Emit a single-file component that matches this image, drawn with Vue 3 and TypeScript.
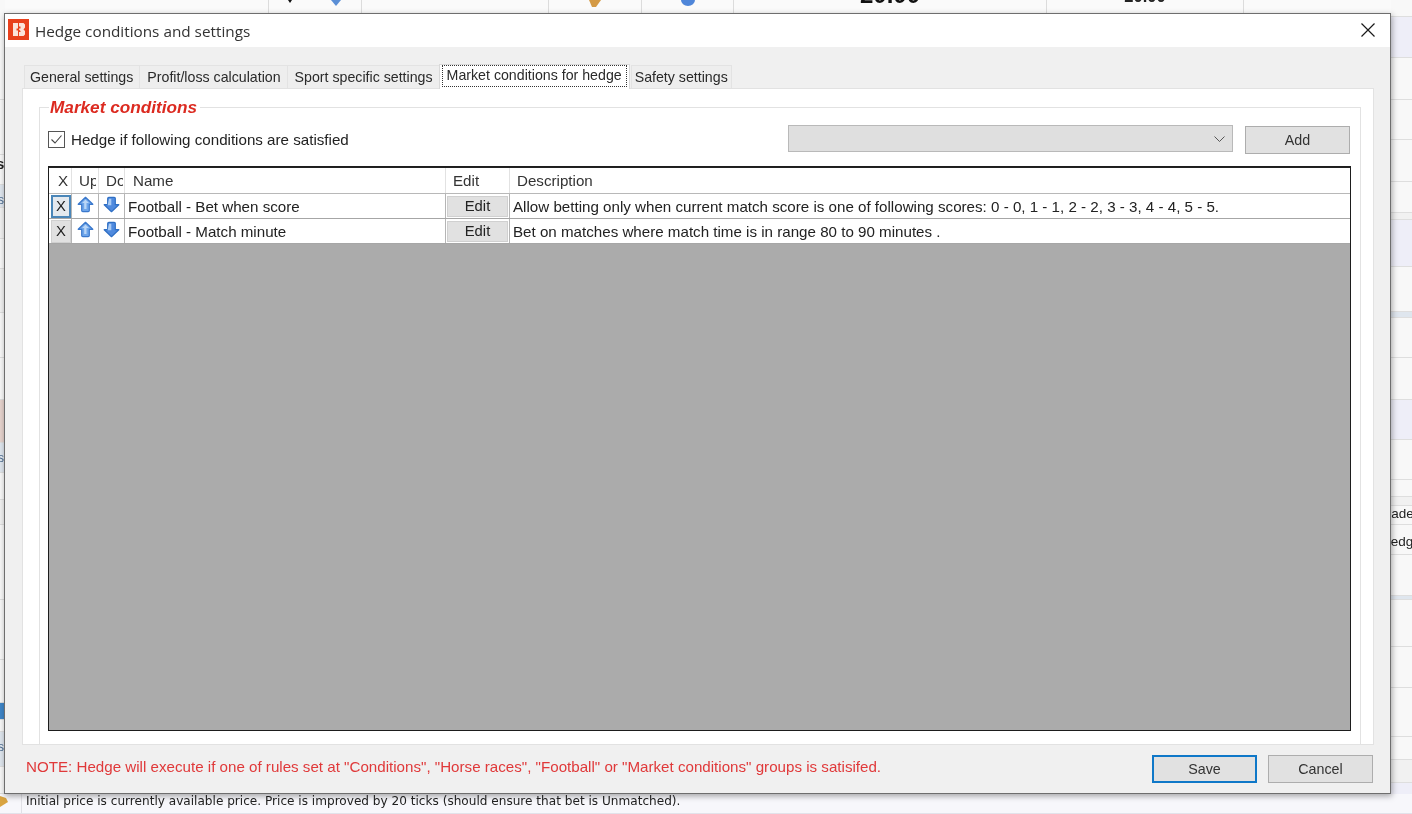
<script setup lang="ts">
interface Row { name: string; desc: string; focus: boolean }
interface Band { y: number; c: string; t?: string; bold?: boolean }
const rows: Row[] = [
  { name: 'Football - Bet when score', desc: 'Allow betting only when current match score is one of following scores: 0 - 0, 1 - 1, 2 - 2, 3 - 3, 4 - 4, 5 - 5.', focus: true },
  { name: 'Football - Match minute', desc: 'Bet on matches where match time is in range 80 to 90 minutes .', focus: false },
]
const tabs = ['General settings', 'Profit/loss calculation', 'Sport specific settings', 'Market conditions for hedge', 'Safety settings']
// each band runs from its y to the next band's y
const withHeights = (list: Band[], end: number) =>
  list.map((b, i) => ({ ...b, h: (i + 1 < list.length ? list[i + 1].y : end) - b.y }))
const rightBands = withHeights([
  { y: 0, c: 'w' }, { y: 17, c: 'l' }, { y: 58, c: 'w' }, { y: 100, c: 'w' }, { y: 140, c: 'w' }, { y: 182, c: 'w' }, { y: 213, c: 'g' },
  { y: 220, c: 'l' }, { y: 267, c: 'w' }, { y: 312, c: 'b' }, { y: 318, c: 'w' }, { y: 358, c: 'w' }, { y: 400, c: 'l' }, { y: 440, c: 'w' },
  { y: 480, c: 'w' }, { y: 497, c: 'g' }, { y: 506, c: 'w', t: 'Trade' }, { y: 525, c: 'w', t: 'Hedge' }, { y: 555, c: 'w' }, { y: 596, c: 'b' },
  { y: 600, c: 'w' }, { y: 647, c: 'w' }, { y: 688, c: 'w' }, { y: 737, c: 'w' }, { y: 760, c: 'g' }, { y: 783, c: 'l' },
], 814)
const leftBands = withHeights([
  { y: 0, c: 'w' }, { y: 100, c: 'w' }, { y: 155, c: 'w', t: 's', bold: true }, { y: 185, c: 'b', t: 's' }, { y: 208, c: 'g' }, { y: 239, c: 'w' }, { y: 269, c: 'g' },
  { y: 313, c: 'w' }, { y: 358, c: 'w' }, { y: 400, c: 'p' }, { y: 443, c: 'b', t: 's' }, { y: 473, c: 'w' }, { y: 500, c: 'g' }, { y: 525, c: 'w' },
  { y: 600, c: 'w' }, { y: 660, c: 'w' }, { y: 703, c: 'm' }, { y: 720, c: 'w' }, { y: 732, c: 'b', t: 's' }, { y: 767, c: 'w' },
], 794)
</script>

<template>
  <div class="desk">
    <div class="bg-top">
      <div class="c c1"></div>
      <div class="c c2">
        <svg width="6" height="4" viewBox="0 0 6 4"><path d="M1 0h4L3 3z" fill="#111"/></svg>
        <svg width="14" height="8" viewBox="0 0 14 8"><path d="M2 0h10L7 6z" fill="#5b8fd6"/></svg>
      </div>
      <div class="c c3"></div>
      <div class="c c4"><svg width="14" height="8" viewBox="0 0 14 8"><path d="M1 0h12L8 7H4z" fill="#d49a45"/></svg></div>
      <div class="c c5"><svg width="16" height="6" viewBox="0 0 16 6"><path d="M1 0a7 6 0 0 0 14 0z" fill="#4f86d9"/></svg></div>
      <div class="c c6"><b class="big">20.00</b></div>
      <div class="c c7"><b class="small">20.00</b></div>
      <div class="c c8"></div>
    </div>

    <div class="bg-left">
      <div v-for="b in leftBands" :key="b.y" class="band" :class="b.c" :style="{ height: b.h + 'px' }"><span v-if="b.t" class="lt" :class="{ lb: b.bold }">{{ b.t }}</span></div>
    </div>

    <div class="bg-right">
      <div v-for="b in rightBands" :key="b.y" class="band" :class="b.c" :style="{ height: b.h + 'px' }">
        <span v-if="b.t" class="rt" :class="b.t">{{ b.t }}</span>
      </div>
    </div>

    <div class="bg-status">
      <svg class="st-ic" width="8" height="14" viewBox="0 0 8 14"><path d="M0 2l6 2 2 4-8 5z" fill="#d9a441"/></svg>
      <span class="st-txt">Initial price is currently available price. Price is improved by 20 ticks (should ensure that bet is Unmatched).</span>
    </div>

    <section class="win">
      <header class="title">
        <svg class="logo" width="21" height="21" viewBox="0 0 21 21">
          <rect width="21" height="21" fill="#e8401c"/>
          <path d="M5 4h5v5.500H8.500v2H10V17H5zM11 4h4.500L17 5.500v3L15.500 10.500l1.500 1.500v3.500L15.500 17H11v-4h1.500v-1L11 10.500V9.500h1.500v-2H11z" fill="#fbe3da"/>
        </svg>
        <span class="title-text">Hedge conditions and settings</span>
        <svg class="close" width="14" height="14" viewBox="0 0 14 14"><path d="M.5.500l13 13M13.500.500l-13 13" stroke="#1a1a1a" stroke-width="1.200" fill="none"/></svg>
      </header>

      <div class="client">
        <nav class="tabs">
          <div v-for="(t, i) in tabs" :key="t" class="tab" :class="{ active: i === 3 }"><span class="tab-l">{{ t }}</span></div>
        </nav>

        <div class="panel">
          <fieldset class="group">
            <legend class="legend">Market conditions</legend>
            <div class="toolbar">
              <label class="chk">
                <svg class="box" width="17" height="17" viewBox="0 0 17 17"><rect x=".5" y=".5" width="16" height="16" fill="#fff" stroke="#555"/><path d="M3.500 8.500l3.500 3.500 6.500-7.500" stroke="#444" fill="none" stroke-width="1.100"/></svg>
                <span>Hedge if following conditions are satisfied</span>
              </label>
              <div class="combo"><svg width="11" height="6" viewBox="0 0 11 6"><path d="M.5.500l5 5 5-5" stroke="#555" fill="none"/></svg></div>
              <button class="btn add">Add</button>
            </div>

            <div class="grid">
              <div class="g-head">
                <div class="hc w-x cx">X</div>
                <div class="hc w-u"><span class="clip">Up</span></div>
                <div class="hc w-d"><span class="clip">Do</span></div>
                <div class="hc w-n">Name</div>
                <div class="hc w-e">Edit</div>
                <div class="hc w-desc">Description</div>
              </div>
              <div v-for="r in rows" :key="r.name" class="g-row">
                <div class="rc w-x"><button class="cellbtn x" :class="{ foc: r.focus }">X</button></div>
                <div class="rc w-u ic">
                  <svg width="17" height="17" viewBox="0 0 17 17">
                    <path d="M8.500 1.300L15.800 8.300 12.300 8.300V14.500Q12.300 15.600 11.200 15.600H5.800Q4.700 15.600 4.700 14.500V8.300H1.200z" fill="#6fa6ea" stroke="#3a78cc" stroke-width="1.200" stroke-linejoin="round"/>
                    <path d="M8.500 3.400L12 6.900H9.500V13H7.200V6.900H5z" fill="#b9d6f7"/>
                  </svg>
                </div>
                <div class="rc w-d ic">
                  <svg width="17" height="17" viewBox="0 0 17 17">
                    <path d="M8.500 15.700L15.800 8.700 12.300 8.700V2.500Q12.300 1.400 11.200 1.400H5.800Q4.700 1.400 4.700 2.500V8.700H1.200z" fill="#4f8ade" stroke="#2f6fc4" stroke-width="1.200" stroke-linejoin="round"/>
                    <path d="M6 2.800H8.300V9.300H4.600z" fill="#a9cbf4"/>
                  </svg>
                </div>
                <div class="rc w-n txt">{{ r.name }}</div>
                <div class="rc w-e"><button class="cellbtn e">Edit</button></div>
                <div class="rc w-desc txt">{{ r.desc }}</div>
              </div>
              <div class="g-empty"></div>
            </div>
          </fieldset>
        </div>

        <footer class="foot">
          <span class="note">NOTE: Hedge will execute if one of rules set at "Conditions", "Horse races", "Football" or "Market conditions" groups is satisifed.</span>
          <button class="btn save">Save</button>
          <button class="btn cancel">Cancel</button>
        </footer>
      </div>
    </section>
  </div>
</template>

<style>
html, body { margin: 0; background: #fff; }
</style>

<style scoped>
.desk { position: relative; width: 1412px; height: 814px; overflow: hidden; background: #fbfbfd; font-family: "Liberation Sans", Arial, sans-serif; color: #1c1c1c; filter: blur(.35px); }

.bg-top { display: flex; height: 14px; background: #fafafa; }
.c { border-right: 1px solid #dcdcdc; box-sizing: border-box; display: flex; justify-content: center; align-items: flex-start; overflow: hidden; gap: 36px; }
.c1 { width: 268px; border-right: 0; } .c2 { width: 94px; border-left: 1px solid #dcdcdc; } .c3 { width: 187px; } .c4 { width: 93px; } .c5 { width: 92px; } .c6 { width: 313px; } .c7 { width: 197px; } .c8 { flex: 1; border-right: 0; }
.big { font-size: 24px; line-height: 10px; margin-top: -10px; color: #111; }
.small { font-size: 16.500px; line-height: 4px; margin-top: -6px; color: #222; }

.bg-left { position: absolute; left: 0; top: 0; width: 5px; overflow: hidden; }
.bg-right { position: absolute; left: 1391px; top: 0; width: 21px; overflow: hidden; }
.band { box-sizing: border-box; border-bottom: 1px solid #dedede; position: relative; overflow: hidden; }
.band.w { background: #f8f8f8; } .band.l { background: #eeeef8; } .band.g { background: #f1f1f1; } .band.b { background: #dfe6ee; } .band.p { background: #e6d3cd; } .band.m { background: #3f86c8; }
.lt { position: absolute; left: -2px; top: 8px; font-size: 12px; color: #4b6b8f; }
.lb { font-size: 15px; font-weight: bold; color: #222; top: 0; left: -4px; }
.rt { position: absolute; top: 0; font-size: 13.500px; line-height: 15px; color: #222; white-space: nowrap; }
.Trade { left: -12px; }
.Hedge { left: -10px; top: 9px; }

.bg-status { position: absolute; left: 0; bottom: 0; height: 20px; width: 100%; box-sizing: border-box; background: #f7f7fb; border-bottom: 1px solid #e2e2ea; display: flex; align-items: flex-start; }
.st-ic { flex: none; margin-right: 13px; }
.st-txt { font-family: "DejaVu Sans", sans-serif; font-size: 12.100px; line-height: 14px; color: #222; white-space: nowrap; border-left: 1px solid #e0e0e6; padding-left: 4px; height: 19px; }

.win { position: absolute; left: 4px; top: 13px; width: 1387px; height: 781px; box-sizing: border-box; border: 1px solid #6e6e6e; background: #f0f0f0; display: flex; flex-direction: column; box-shadow: 1px 2px 6px rgba(0,0,0,.35); }
.title { height: 33px; flex: none; background: #fff; display: flex; align-items: center; padding-left: 3px; padding-right: 15px; }
.logo { flex: none; margin-right: 6px; margin-bottom: 2px; }
.title-text { font-family: "Open Sans", sans-serif; font-size: 15.300px; color: #333; flex: 1; }
.close { flex: none; margin-bottom: 2px; }

.client { flex: 1; min-height: 0; display: flex; flex-direction: column; padding: 0 16px 0 17px; }
.tabs { display: flex; height: 23px; margin-top: 18px; padding-left: 2px; align-items: flex-end; flex: none; position: relative; z-index: 1; }
.tab { box-sizing: border-box; height: 23px; padding: 0 6px 0 7px; background: #eeeeee; border-top: 1px solid #e3e3e3; border-right: 1px solid #e3e3e3; font-size: 14.200px; display: flex; align-items: center; white-space: nowrap; color: #2a2a2a; }
.tab:first-child { border-left: 1px solid #e3e3e3; padding-left: 5px; }
.tab:last-child { margin-left: 1px; padding: 0 3px; border-left: 1px solid #e3e3e3; }
.tab.active { background: #fff; height: 25px; padding: 0 2px; margin: 0 0 -1px -1px; border: 1px solid #d9d9d9; border-bottom: 0; align-items: flex-start; }
.tab.active .tab-l { outline: 1px dotted #333; outline-offset: -1px; padding: 0 5px; height: 22px; line-height: 20px; }

.panel { flex: none; height: 657px; box-sizing: border-box; background: #fff; border: 1px solid #e2e2e2; padding: 0 12px 0 16px; }
.group { margin: 9px 0 0; padding: 0 9px 0 8px; height: 647px; box-sizing: border-box; border: 1px solid #e2e2e2; border-bottom: 0; min-width: 0; }
.legend { font-size: 17.200px; font-weight: bold; font-style: italic; color: #dc2a20; padding: 0 3px 0 1px; margin-left: 1px; line-height: 19px; }

.toolbar { display: flex; align-items: flex-start; height: 49px; padding-top: 8px; box-sizing: border-box; }
.chk { display: flex; align-items: center; gap: 6px; font-size: 15.150px; width: 740px; height: 17px; padding-top: 6px; flex: none; color: #222; }
.box { flex: none; }
.combo { box-sizing: border-box; width: 445px; height: 27px; background: #dfdfdf; border: 1px solid #b9b9b9; display: flex; align-items: center; justify-content: flex-end; padding-right: 7px; margin-right: 12px; flex: none; }
.btn { box-sizing: border-box; font: 14.300px "Liberation Sans", Arial, sans-serif; color: #333; background: #e1e1e1; border: 1px solid #adadad; padding: 0; }
.add { width: 105px; height: 28px; margin-top: 1px; flex: none; }

.grid { box-sizing: border-box; height: 565px; width: 1303px; border: 1px solid #1d1d1d; background: #ababab; display: flex; flex-direction: column; }
.g-head { display: flex; height: 27px; background: #fff; flex: none; border-bottom: 1px solid #b8b8b8; border-top: 1px solid #222; box-sizing: border-box; }
.g-row { display: flex; height: 25px; background: #fff; flex: none; box-sizing: border-box; border-bottom: 1px solid #a6a6a6; }
.g-row:last-of-type { border-bottom: 0; }
.hc { box-sizing: border-box; border-right: 1px solid #e2e2e2; font-size: 15.150px; line-height: 26px; padding-left: 8px; overflow: hidden; white-space: nowrap; color: #333; }
.hc.cx { padding-left: 9px; }
.rc { box-sizing: border-box; border-right: 1px solid #b5b5b5; display: flex; align-items: center; font-size: 15.150px; white-space: nowrap; overflow: hidden; }
.w-x { width: 23px; flex: none; } .w-u { width: 27px; flex: none; } .w-d { width: 26px; flex: none; } .w-n { width: 321px; flex: none; } .w-e { width: 64px; flex: none; } .w-desc { flex: 1; border-right: 0; }
.hc.w-u, .hc.w-d, .hc.w-e, .hc.w-desc { padding-left: 7px; }
.clip { display: block; width: 17px; overflow: hidden; }
.ic { justify-content: center; padding-bottom: 3px; }
.txt { padding-left: 3px; color: #222; }
.cellbtn { box-sizing: border-box; font: 14.800px "Liberation Sans", Arial, sans-serif; color: #222; background: #e1e1e1; border: 1px solid #d0d0d0; padding: 0; }
.x { width: 20px; height: 23px; margin-left: 2px; }
.x.foc { border: 2px solid #4a86b8; background: #e4e9ee; }
.e { width: 61px; height: 21px; margin-left: 1px; }
.g-empty { flex: 1; }

.foot { flex: 1; display: flex; align-items: flex-start; padding: 10px 1px 0 4px; }
.note { color: #e0393a; font-size: 15.150px; flex: 1; white-space: nowrap; padding-top: 3px; }
.save { width: 105px; height: 28px; border: 2px solid #0f78c8; }
.cancel { width: 105px; height: 28px; margin-left: 11px; }
</style>
